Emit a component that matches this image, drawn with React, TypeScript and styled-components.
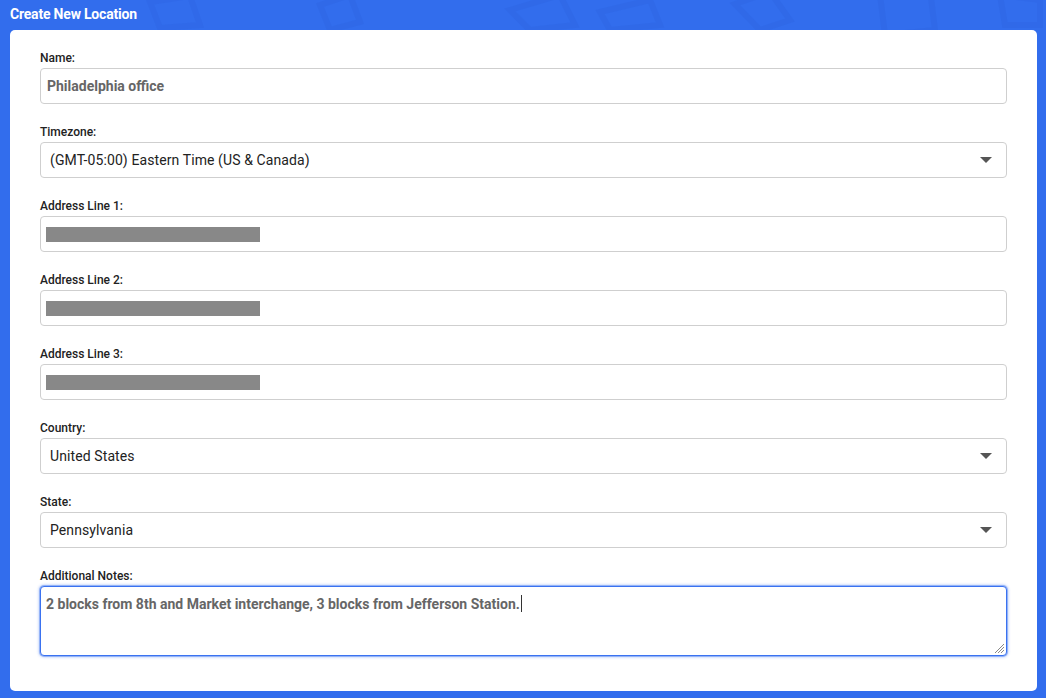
import React from "react";
import styled, { createGlobalStyle } from "styled-components";

const Global = createGlobalStyle`
  html, body { margin: 0; padding: 0; }
  body {
    background: #326ded;
    font-family: Roboto, "Liberation Sans", Arial, sans-serif;
    -webkit-font-smoothing: antialiased;
  }
  * { box-sizing: border-box; }
`;

const Page = styled.div`
  position: relative;
  width: 1046px;
  height: 698px;
  background: #326ded;
  overflow: hidden;
  padding: 0 10px;
`;

const Deco = styled.svg`
  position: absolute;
  inset: 0;
  pointer-events: none;
`;

const Title = styled.h1`
  position: relative;
  margin: 0;
  height: 30px;
  line-height: 28px;
  font-size: 14px;
  font-weight: 700;
  color: #ffffff;
  letter-spacing: -0.2px;
`;

const Card = styled.div`
  position: relative;
  width: 1027px;
  background: #ffffff;
  border-radius: 5px;
  padding: 20px 30px 35px 30px;
  display: flex;
  flex-direction: column;
  gap: 20px;
`;

const Field = styled.div`
  display: flex;
  flex-direction: column;
  gap: 2px;
`;

const Label = styled.label`
  font-size: 12px;
  line-height: 16px;
  font-weight: 500;
  color: #222;
`;

const Box = styled.div<{ $focus?: boolean; $tall?: boolean }>`
  position: relative;
  height: ${(p) => (p.$tall ? "70px" : "36px")};
  border: 1px solid ${(p) => (p.$focus ? "#3a72f0" : "#cfcfcf")};
  box-shadow: ${(p) => (p.$focus ? "0 0 0 1px rgba(58,114,240,0.35), 0 0 3px 1px rgba(58,114,240,0.45)" : "none")};
  border-radius: 4px;
  background: #fff;
  display: flex;
  align-items: ${(p) => (p.$tall ? "flex-start" : "center")};
  padding: ${(p) => (p.$tall ? "8px 5px" : "0 6px")};
`;

const InputText = styled.span`
  font-size: 14px;
  font-weight: 700;
  color: #666;
  line-height: 18px;
`;

const SelectText = styled.span`
  font-size: 14px;
  font-weight: 400;
  color: #222;
  padding-left: 3px;
  letter-spacing: 0.1px;
  flex: 1;
`;

const Caret = styled.span`
  width: 0;
  height: 0;
  border-left: 6px solid transparent;
  border-right: 6px solid transparent;
  border-top: 6px solid #555;
  margin-right: 8px;
`;

const Redacted = styled.span`
  width: 214px;
  height: 15px;
  margin-left: -1px;
  background: #888;
`;

const Cursor = styled.span`
  display: inline-block;
  width: 1px;
  height: 17px;
  background: #333;
  vertical-align: -3px;
  margin-left: 1px;
`;

const Grip = styled.svg`
  position: absolute;
  right: 1px;
  bottom: 1px;
`;

const TextInput = ({ value }: { value: string }) => (
  <Box>
    <InputText>{value}</InputText>
  </Box>
);

const Select = ({ value }: { value: string }) => (
  <Box>
    <SelectText>{value}</SelectText>
    <Caret />
  </Box>
);

const Hidden = () => (
  <Box>
    <Redacted />
  </Box>
);

export default function App() {
  return (
    <Page>
      <Global />
      <Deco width="1046" height="698" viewBox="0 0 1046 698">
        <g fill="none" stroke="#2f68e6" strokeWidth="6" opacity="0.6">
          <path d="M735 4 L770 -8 L790 20 L760 30 Z" />
          <path d="M880 -5 L930 -10 L935 30 L885 35 Z" />
          <path d="M510 10 L560 -5 L575 25 L530 30 Z" />
          <path d="M320 5 L350 -5 L360 22 L330 30 Z" />
          <path d="M600 12 L650 0 L660 25 L610 30 Z" />
          <path d="M150 2 L190 -4 L200 25 L160 28 Z" />
          <path d="M1000 -5 L1040 0 L1040 25 L1005 25 Z" />
        </g>
      </Deco>
      <Title>Create New Location</Title>
      <Card>
        <Field>
          <Label>Name:</Label>
          <TextInput value="Philadelphia office" />
        </Field>
        <Field>
          <Label>Timezone:</Label>
          <Select value="(GMT-05:00) Eastern Time (US & Canada)" />
        </Field>
        <Field>
          <Label>Address Line 1:</Label>
          <Hidden />
        </Field>
        <Field>
          <Label>Address Line 2:</Label>
          <Hidden />
        </Field>
        <Field>
          <Label>Address Line 3:</Label>
          <Hidden />
        </Field>
        <Field>
          <Label>Country:</Label>
          <Select value="United States" />
        </Field>
        <Field>
          <Label>State:</Label>
          <Select value="Pennsylvania" />
        </Field>
        <Field>
          <Label>Additional Notes:</Label>
          <Box $focus $tall>
            <InputText>
              2 blocks from 8th and Market interchange, 3 blocks from Jefferson Station.
              <Cursor />
            </InputText>
            <Grip width="12" height="12" viewBox="0 0 12 12">
              <g stroke="#888" strokeWidth="1">
                <line x1="11" y1="2" x2="2" y2="11" />
                <line x1="11" y1="5" x2="5" y2="11" />
                <line x1="11" y1="8" x2="8" y2="11" />
              </g>
            </Grip>
          </Box>
        </Field>
      </Card>
    </Page>
  );
}
